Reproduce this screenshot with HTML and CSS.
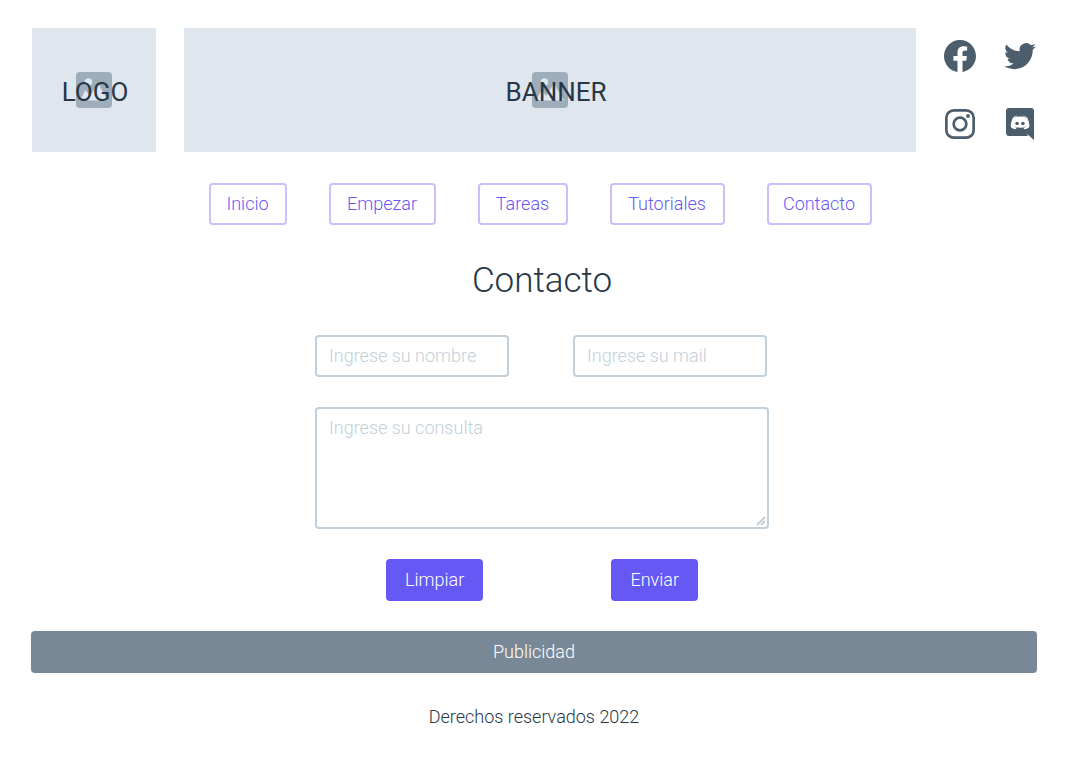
FILE: index.html
```html
<!DOCTYPE html>
<html lang="es">
<head>
<meta charset="utf-8">
<meta name="viewport" content="width=device-width, initial-scale=1">
<title>Contacto</title>
<link rel="stylesheet" href="styles.css">
</head>
<body>
<svg class="defs" aria-hidden="true">
  <symbol id="picture" viewBox="0 0 36 36">
    <rect width="36" height="36" rx="4" fill="#9dadb9"/>
    <circle cx="12.500" cy="10" r="3.700" fill="#dfe6ed"/>
    <path d="M4 28.500L9.500 18l4.500 6 8-12.500 10 17z" fill="#dfe6ed"/>
  </symbol>
</svg>
<header class="header">
  <div class="placeholder logo">
    <svg class="picture" aria-hidden="true"><use href="#picture"/></svg>
    <span class="caption">LOGO</span>
  </div>
  <div class="placeholder banner">
    <svg class="picture" aria-hidden="true"><use href="#picture"/></svg>
    <span class="caption">BANNER</span>
  </div>
  <div class="social">
    <a href="#" aria-label="Facebook"><svg viewBox="0 0 16 16"><path d="M16 8.049c0-4.446-3.582-8.050-8-8.050C3.580 0-.002 3.603-.002 8.050c0 4.017 2.926 7.347 6.750 7.951v-5.625h-2.030V8.050H6.750V6.275c0-2.017 1.195-3.131 3.022-3.131.876 0 1.791.157 1.791.157v1.980h-1.009c-.993 0-1.303.621-1.303 1.258v1.510h2.218l-.354 2.326H9.250V16c3.824-.604 6.750-3.934 6.750-7.951z"/></svg></a>
    <a href="#" aria-label="Twitter"><svg viewBox="0 0 16 16"><path d="M5.026 14.600c6.038 0 9.341-5.003 9.341-9.334 0-.140 0-.282-.006-.422A6.685 6.685 0 0 0 16 3.142a6.658 6.658 0 0 1-1.889.518 3.301 3.301 0 0 0 1.447-1.817 6.533 6.533 0 0 1-2.087.793A3.286 3.286 0 0 0 7.875 5.630a9.325 9.325 0 0 1-6.767-3.429 3.289 3.289 0 0 0 1.018 4.382A3.323 3.323 0 0 1 .640 6.175v.045a3.288 3.288 0 0 0 2.632 3.218 3.203 3.203 0 0 1-.865.115 3.230 3.230 0 0 1-.614-.057 3.283 3.283 0 0 0 3.067 2.277A6.588 6.588 0 0 1 .780 13.180a6.320 6.320 0 0 1-.780-.045A9.344 9.344 0 0 0 5.026 14.600z"/></svg></a>
    <a href="#" aria-label="Instagram"><svg viewBox="0 0 32 32"><g fill="none" stroke="currentColor" stroke-width="2.700"><rect x="2.350" y="2.350" width="27.300" height="27.300" rx="7.500"/><circle cx="16" cy="16" r="6.300"/></g><circle cx="24" cy="8" r="1.900"/></svg></a>
    <a href="#" aria-label="Discord"><svg viewBox="0 0 32 32"><g transform="translate(2 0)"><path d="M3 0h22a3 3 0 0 1 3 3v29l-7.500-6.400L22 28H3a3 3 0 0 1-3-3V3a3 3 0 0 1 3-3z"/><path fill="#fff" transform="translate(0 .3) scale(.0625)" d="M375.040 295.424c0-82.432-36.864-149.248-36.864-149.248-36.864-27.648-71.936-26.880-71.936-26.880l-3.584 4.096c43.520 13.312 63.744 32.512 63.744 32.512-60.811-33.329-132.244-33.335-191.232-7.424-9.472 4.352-15.104 7.424-15.104 7.424s21.248-20.224 67.328-33.536l-2.560-3.072s-35.072-.768-71.936 26.880c0 0-36.864 66.816-36.864 149.248 0 0 21.504 37.120 78.080 38.912 0 0 9.472-11.520 17.152-21.248-32.512-9.728-44.800-30.208-44.800-30.208 3.766 2.636 9.976 6.053 10.496 6.400 43.210 24.198 104.588 32.126 159.744 8.960 8.960-3.328 18.944-8.192 29.440-15.104 0 0-12.800 20.992-46.336 30.464 7.680 9.728 16.896 20.736 16.896 20.736 56.576-1.792 78.336-38.912 78.336-38.912z"/><circle cx="11.100" cy="15.500" r="1.800"/><circle cx="16.900" cy="15.500" r="1.800"/></g></svg></a>
  </div>
</header>
<nav class="nav" aria-label="Principal">
  <a href="#">Inicio</a>
  <a href="#">Empezar</a>
  <a href="#">Tareas</a>
  <a href="#">Tutoriales</a>
  <a href="#">Contacto</a>
</nav>
<main class="main">
  <h1>Contacto</h1>
  <form class="form">
    <div class="fields">
      <input class="field" type="text" aria-label="Nombre" placeholder="Ingrese su nombre">
      <input class="field" type="email" aria-label="Mail" placeholder="Ingrese su mail">
    </div>
    <div class="message">
      <textarea class="field" aria-label="Consulta" placeholder="Ingrese su consulta"></textarea>
      <svg class="grip" viewBox="0 0 10 10" aria-hidden="true"><path d="M1 9l8-8M5 9l4-4"/></svg>
    </div>
    <div class="actions">
      <button type="reset">Limpiar</button>
      <button type="button">Enviar</button>
    </div>
  </form>
</main>
<aside class="ad">Publicidad</aside>
<footer class="footer">Derechos reservados 2022</footer>
</body>
</html>
```
FILE: styles.css
```css
* { box-sizing: border-box; }

body {
  margin: 0;
  padding: 28px 0;
  background: #fff;
  color: #273747;
  font: 300 18px/28px Roboto, sans-serif;
}

.defs { display: block; width: 0; height: 0; }

.header {
  display: grid;
  grid-template-columns: 124px 1fr auto;
  gap: 28px;
  padding: 0 44px 0 32px;
}

.placeholder {
  display: grid;
  place-items: center;
  height: 124px;
  background: #dfe6ed;
}

.picture, .caption { grid-area: 1 / 1; }
.picture { width: 36px; height: 36px; }
.caption { z-index: 1; padding: 4px 0 0 2px; font-size: 26px; font-weight: 400; }
.banner .caption { padding-left: 12px; }

.social {
  display: grid;
  grid-template-columns: 32px 32px;
  gap: 36px 28px;
  align-content: center;
}

.social a { color: #4c5d6c; height: 32px; }
.social svg { display: block; width: 32px; height: 32px; fill: currentColor; }

.nav {
  display: grid;
  grid-template-columns: 78px 107px 90px 115px 105px;
  justify-content: center;
  gap: 42px;
  margin-top: 31px;
}

.nav a {
  padding: 5px 0;
  border: 2px solid #c6c1fc;
  border-radius: 4px;
  color: #6558f5;
  text-align: center;
  text-decoration: none;
}

.main { padding-left: 4px; }

h1 {
  margin: 30px 0;
  padding-top: 2px;
  font-size: 35px;
  line-height: 48px;
  font-weight: 300;
  text-align: center;
}

.form {
  display: grid;
  gap: 30px;
  max-width: 454px;
  margin: 0 auto 30px;
}

.fields {
  display: grid;
  grid-template-columns: 1fr 1fr;
  gap: 64px;
  padding-right: 2px;
}

.field {
  display: block;
  width: 100%;
  min-width: 0;
  height: 42px;
  padding: 4px 12px 6px;
  border: 2px solid #c3cfd9;
  border-radius: 4px;
  background: #fff;
  color: #273747;
  font: inherit;
}

.field::placeholder { color: #c3cfd9; opacity: 1; }

.message { position: relative; }
.message .field { height: 122px; padding-top: 5px; resize: none; }

.grip {
  position: absolute;
  right: 3px;
  bottom: 3px;
  width: 10px;
  height: 10px;
  fill: none;
  stroke: #c3cfd9;
  stroke-width: 2px;
}

.actions {
  display: flex;
  justify-content: space-between;
  padding: 0 71px;
}

button {
  height: 42px;
  padding: 0 19px;
  border: 0;
  border-radius: 4px;
  background: #6558f5;
  color: #fff;
  font: inherit;
}

.ad {
  margin: 0 43px 30px 31px;
  padding: 7px;
  border-radius: 4px;
  background: #788896;
  color: #fff;
  text-align: center;
}

.footer {
  padding: 0 44px 0 32px;
  text-align: center;
}
```
